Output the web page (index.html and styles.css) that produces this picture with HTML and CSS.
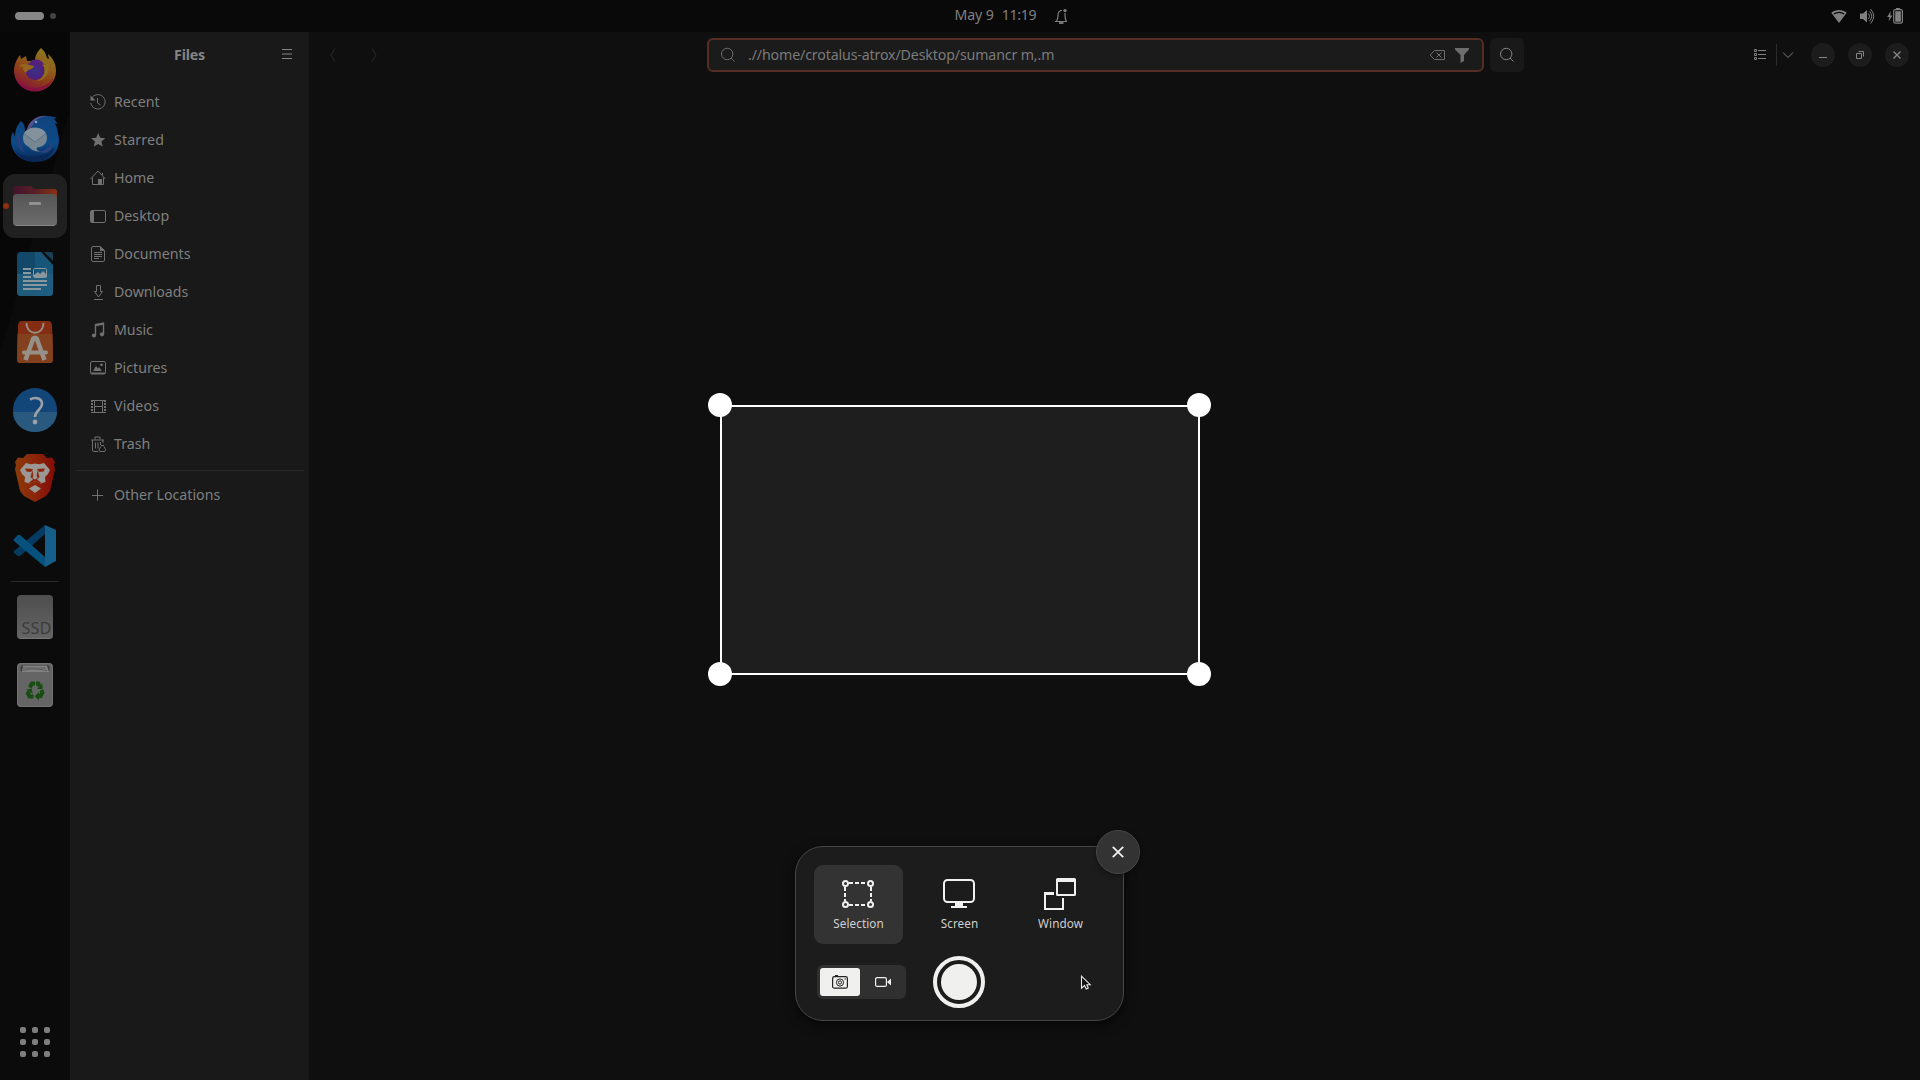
FILE: index.html
```html
<!DOCTYPE html>
<html lang="en">
<head>
<meta charset="utf-8">
<title>Files</title>
<link rel="stylesheet" href="styles.css">
</head>
<body>
<header class="topbar">
  <div class="workspaces"><span class="pill"></span><span class="dot"></span></div>
  <div class="clock"><span>May 9</span><span class="time">11:19</span>
    <svg class="bell" width="16" height="16" viewBox="0 0 16 16" fill="none" stroke="currentColor"><path d="M2 13.500h12M3.500 13c1.500-1.500 1.300-3.500 1.500-6C5.200 4 6.500 2.500 9 2.500M12 7c0 2.500.1 4.500 1.300 6M12 5v2" stroke-width="1.200"/><path d="M6 15h4.500" stroke-width="1.800"/><circle cx="12" cy="2.600" r="1.700" fill="currentColor" stroke="none"/></svg>
  </div>
  <div class="status">
    <svg width="16" height="16" viewBox="0 0 16 16"><path d="M.3 4.800C4.500 1.200 11.500 1.200 15.700 4.800L8 15z" fill="currentColor"/><path d="M2.800 6C6 4 10 4 13.200 6" stroke="#090909" stroke-width="1.200" fill="none"/></svg>
    <svg width="16" height="16" viewBox="0 0 16 16"><path d="M1 5.500h3L8 2v12.500L4 11H1z" fill="currentColor"/><path d="M9.500 5.500q2 2.700 0 5.500M10.500 3.200q4.500 5 0 10M11.500 1q6.500 7 0 14.500" stroke="currentColor" fill="none"/></svg>
    <svg width="16" height="16" viewBox="0 0 16 16"><path d="M3.800 3L.2 9h2.300L1.500 13.500 5.500 7.500H3.200z" fill="currentColor"/><rect x="6.700" y="1.600" width="8.700" height="13.600" rx="1.700" fill="none" stroke="currentColor" stroke-width="1.200"/><path d="M9 0h4v1.500H9zM8.200 3.200h5.700v10.500H8.200z" fill="currentColor"/></svg>
  </div>
</header>

<div class="workspace">
  <nav class="dock">
    <div class="app"><svg width="48" height="48" viewBox="0 0 48 48">
      <defs>
        <linearGradient id="fx" x1=".8" y1="0" x2=".3" y2="1"><stop offset="0" stop-color="#8a7b23"/><stop offset=".35" stop-color="#90601a"/><stop offset=".65" stop-color="#8e3d19"/><stop offset="1" stop-color="#85103f"/></linearGradient>
        <radialGradient id="fg"><stop offset="0" stop-color="#383384"/><stop offset="1" stop-color="#501d7b"/></radialGradient>
      </defs>
      <path d="M30 2c4 3 5 7 6 10l2 1-1-5c6 5 8 11 8 17a21 20.500 0 0 1-42 0C3 18 6 13 9 9l1 4 5-3 1 5 8 0c0-6 3-10 6-13z" fill="url(#fx)"/>
      <circle cx="24" cy="24.500" r="9.500" fill="url(#fg)"/>
      <path d="M18 16c7-4 14-2 17 3l-3 0c4 6 1 14-7 16 12 0 16-14 10-20" fill="#8d701e"/>
      <path d="M20 15c6-3 11-1 13 4l-3-1c3 2 3 5 2 7-4-6-9-8-14-6z" fill="#53217d"/>
      <path d="M8 20c4-4 10-1 15 0-1 4-7 3-8 7-2-1-3-4-3-6z" fill="#96661e"/>
      <path d="M4 31c6 13 30 15 38 1-2 8-9 13-18 13S7 41 4 31z" fill="#840e45" opacity=".75"/>
    </svg></div>
    <div class="app"><svg class="mail" width="48" height="48" viewBox="0 0 48 48">
      <defs><linearGradient id="tb" x1="0" y1="0" x2="0" y2="1"><stop offset="0" stop-color="#10437d"/><stop offset=".6" stop-color="#0c4a86"/><stop offset="1" stop-color="#0a2858"/></linearGradient></defs>
      <path d="M16 15C19 5 27 1 35 1c6 0 8 1 11 2l-3 1 4 5-3-1 3 8-1-1c6 16-2 32-22 32C9 47 0 37 0 25c0-4 1-7 2-8l2 5c0-7 2-12 6-16 4 3 4 7 4 12z" fill="url(#tb)"/>
      <path d="M16 14C19 4 28 0 36 1c-8 1-13 5-14 9l-4 5z" fill="#54508c"/>
      <path d="M4 36c10 8 30 8 40-4-4 10-11 14-20 14-8 0-15-3-20-10z" fill="#0a2857"/>
      <path d="M6 20c-2 8 2 15 8 18-4-6-5-11-5-18z" fill="#2a3f7c"/>
      <path d="M27 36c8 1 13-4 13-10 3 9-5 15-13 10z" fill="#30417c"/>
      <path d="M12 23c0-6 5-10.500 12-10.500S36 17 36 23s-5 9.500-10 9.500c-1 1.500 0 3 3 4-6 0-9-2-11-4.500-3.500-1.500-6-5-6-9z" fill="#768793"/>
      <path d="M13 18.500l11 8.500 11-8.500q-3-5.500-11-5.500t-11 5.500z" fill="#83929d"/><path d="M13 18.500l11 8.500 11-8.500" fill="none" stroke="#5c7282"/><circle cx="25" cy="7" r="1.300" fill="#8aa0b0"/>
    </svg></div>
    <div class="app"><div class="tile"><i class="running"></i><svg width="48" height="48" viewBox="0 0 48 48">
      <defs><linearGradient id="fo"><stop offset="0" stop-color="#42142b"/><stop offset=".5" stop-color="#581f27"/><stop offset="1" stop-color="#8a3011"/></linearGradient><linearGradient id="fw" x2="0" y2="1"><stop offset="0" stop-color="#555"/><stop offset="1" stop-color="#6c6c6c"/></linearGradient></defs>
      <path d="M2 7q0-3 3-3h14q1.500 0 2.500 1.500T25 7h18q3 0 3 3v15H2z" fill="url(#fo)"/>
      <rect x="2" y="12" width="44" height="32" rx="4" fill="url(#fw)"/><path d="M5 43.500h38" stroke="#858585"/><rect x="18" y="20" width="12" height="3" rx="1" fill="#919191"/>
    </svg></div></div>
    <div class="app"><svg width="48" height="48" viewBox="0 0 48 48">
      <path d="M10 2h20l12 13v27q0 4-4 4H10q-4 0-4-4V6q0-4 4-4z" fill="#12486a"/><path d="M6 24h36v18q0 4-4 4H10q-4 0-4-4z" fill="#205b7a"/><path d="M24 2h6l12 13v27q0 4-4 4H24z" fill="#1b5f83" opacity=".6"/><path d="M33 2h7q2 0 2 2v7z" fill="#173f57"/>
      <path d="M12 19h8M12 23h8M12 27h8M12 31h24M12 35h24M12 39h18" stroke="#8a979d" stroke-width="2"/><rect x="22.500" y="18.500" width="13" height="9" rx="1" fill="none" stroke="#8a979d"/><path d="M23 27v-2l4-3 2 2 3-3 4 4v2z" fill="#8a979d"/>
    </svg></div>
    <div class="app"><svg width="48" height="48" viewBox="0 0 48 48">
      <path d="M11 3h26q3.500 0 4 4l1 34q0 4-3 4H9q-3 0-3-4L7 7q.500-4 4-4z" fill="#842d12"/><path d="M6.600 16h34.900l.5 25q0 4-3 4H9q-3 0-3-4z" fill="#82401f"/><path d="M15.500 5c0 13 17 13 17 0" fill="none" stroke="#979089" stroke-width="1.800"/>
      <path d="M14.500 42l8-22h3l8 22" fill="none" stroke="#979089" stroke-width="4.500" stroke-linejoin="bevel"/><rect x="11" y="32.500" width="26" height="4" rx="2" fill="#979089"/>
    </svg></div>
    <div class="app"><svg width="48" height="48" viewBox="0 0 48 48">
      <circle cx="24" cy="24" r="22" fill="#124679"/><path d="M2 26h44a22 20 0 0 1-44 0z" fill="#29597f"/>
      <path d="M19 13.500c6-3 12-1 12 4.500 0 6-7 6-7 13" fill="none" stroke="#9aa1a7" stroke-width="2.600"/><circle cx="24" cy="36" r="2.400" fill="#9aa1a7"/>
    </svg></div>
    <div class="app"><svg width="48" height="48" viewBox="0 0 48 48">
      <defs><linearGradient id="br"><stop offset="0" stop-color="#8b3b0a"/><stop offset=".45" stop-color="#8b270a"/><stop offset="1" stop-color="#850c08"/></linearGradient></defs>
      <path d="M16 0h16l4 4 5-.5 3 4.500-1 3 1 4-5 22-4 5-11 6-11-6-4-5-5-22 1-4-1-3 3-4.500 5 .5z" fill="url(#br)"/>
      <path d="M15 9l5 1.200 4-.7 4 .7L33 9l6 7-2 4-3 3 .5 5-5 1.500L24 27l-5.500 2.500-5-1.500.5-5-3-3-2-4zM24 31l6 3.500-6 4.500-6-4.500z" fill="#9b9795"/>
      <path d="M14 14.500l8 .5-2 3-4.500-.500zM34 14.500l-8 .5 2 3 4.500-.500zM21.500 16l-2 7 2.500 2.500-4 3 1.500 1 4.500-2.500 4.500 2.500 1.500-1-4-3 2.500-2.500-2-7-.8 6 1 2-2.700 1.500-2.700-1.500 1-2z" fill="#8b260a"/>
    </svg></div>
    <div class="app"><svg width="48" height="48" viewBox="0 0 48 48">
      <path d="M3 31l4 3q1 .5 2 0l25-22V3L3 29q-1 1 0 2z" fill="#053b62"/><path d="M3 17l4-4q1-.5 2 0l25 22v10L3 19q-1-1 0-2z" fill="#07517f"/><path d="M34 3l11 5v31l-11 6z" fill="#175f8b"/>
    </svg></div>
    <hr class="dock-line">
    <div class="app"><div class="ssd">SSD</div></div>
    <div class="app"><svg width="48" height="48" viewBox="0 0 48 48">
      <rect x="6" y="2" width="36" height="44" rx="4" fill="#656565"/><rect x="6.500" y="2.500" width="35" height="43" rx="4" fill="none" stroke="#747474"/><rect x="9.500" y="4" width="29" height="7" rx="3" fill="#3d3d3d"/><path d="M12 4.500h24l2 6.500H11z" fill="#818181"/><path d="M12 7h23M12 9.500q8-3 24 0" stroke="#5c5c5c" fill="none"/>
      <g fill="none" stroke="#174d11" stroke-width="4"><path d="M18.800 26.500l2.200-4h3"/><path d="M25 22.500h2.200l1.500 2.700M30.200 29l1.200 2.500-1.700 3.500h-2.200M22.500 35.500h-4l-1.500-3 1-2"/></g><path d="M31.500 22.500v5.500h-5.500zM28 30.800v8.700l-4.300-4.300zM15 28.800l5.500-1.300 1.300 5z" fill="#174d11"/>
    </svg></div>
    <div class="apps-grid"><i></i><i></i><i></i><i></i><i></i><i></i><i></i><i></i><i></i></div>
  </nav>

  <aside class="sidebar">
    <div class="side-head"><h1>Files</h1><svg class="menu" width="16" height="16" viewBox="0 0 16 16" stroke="currentColor"><path d="M3 3.500h10M3 8h10M3 12.500h10" stroke-width="1"/></svg></div>
    <ul class="places">
      <li><svg viewBox="0 0 16 16"><path d="M1.500 4.500A7.200 7.200 0 1 1 .8 9M7.500 4v5l3 2"/><path d="M.5 1.500v5h5z" fill="currentColor" stroke="none"/></svg>Recent</li>
      <li class="wide"><svg viewBox="0 0 16 16"><path d="M8.200 1l2 4.800 5.200.4-4 3.400 1.300 5-4.500-2.700-4.500 2.700 1.300-5-4-3.400 5.200-.4z" fill="currentColor" stroke="none"/></svg>Starred</li>
      <li><svg viewBox="0 0 16 16"><path d="M.5 9l7.500-8 7.500 8M2.500 7.500v7h11v-7M12.500 5V3"/><path d="M8 9h4v5.500H8z" fill="currentColor" stroke="none"/></svg>Home</li>
      <li><svg viewBox="0 0 16 16"><rect x=".5" y="2.500" width="15" height="12" rx="1.500"/><path d="M1 2.500h3v12H1z" fill="currentColor" stroke="none"/></svg>Desktop</li>
      <li><svg viewBox="0 0 16 16"><path d="M3 .5h7.500l4 4V14q0 1.500-1.500 1.500H3Q1.500 15.500 1.500 14V2Q1.500.5 3 .5zM4 6.500h8M4 8.500h8M4 10.500h8M4 12.500h5"/><path d="M10 .5v4.500h4.500z" fill="currentColor" stroke="none"/></svg>Documents</li>
      <li><svg viewBox="0 0 16 16"><path d="M6.500 1.500h4v6h2L8.500 13 4.500 7.500h2zM4 15.500h9"/></svg>Downloads</li>
      <li><svg viewBox="0 0 16 16"><path d="M5.500 13V2.500l8-1.500v11M5.500 3.500l8-1.500" stroke-width="1.400"/><circle cx="4" cy="13.500" r="2.100" fill="currentColor" stroke="none"/><circle cx="12" cy="12.300" r="2.100" fill="currentColor" stroke="none"/></svg>Music</li>
      <li><svg viewBox="0 0 16 16"><rect x=".5" y="1.500" width="15" height="12.500" rx="1.500"/><path d="M3 11l3-5 2 2.500L9 7l3 4zM1 12.500h14V14H1z" fill="currentColor" stroke="none"/><circle cx="11.500" cy="4.800" r="1.400" fill="currentColor" stroke="none"/></svg>Pictures</li>
      <li class="wide"><svg viewBox="0 0 16 16"><path d="M4.500 2.500h8v12h-8zM4.500 8.500h8"/><path d="M2 2v13M15 2v13" stroke-width="2" stroke-dasharray="2 1"/><path d="M1.500 2.500h14M1.500 14.500h14"/></svg>Videos</li>
      <li><svg viewBox="0 0 16 16"><path d="M1 4h13M5 3.500V1h5v2.500M2.500 4v10q0 1.500 1.500 1.500h4M5.500 6.500v6M8 6.500v6M10.500 6v3M13 4v3M11 9.500h3M11 10.500q-4 5 0 5h3q3 0 0-5"/></svg>Trash</li>
    </ul>
    <hr class="side-line">
    <ul class="places"><li><svg viewBox="0 0 16 16"><path d="M7.500 2.500v11M2 8.500h11"/></svg>Other Locations</li></ul>
  </aside>

  <main class="content">
    <div class="toolbar">
      <div class="nav-arrows">
        <svg width="6" height="14" viewBox="0 0 6 14"><path d="M5 .5L1 7l4 6.500"/></svg>
        <svg width="6" height="14" viewBox="0 0 6 14"><path d="M1 .5L5 7l-4 6.500"/></svg>
      </div>
      <div class="path">
        <svg width="16" height="16" viewBox="0 0 16 16"><circle cx="7.200" cy="7" r="5.700"/><path d="M11 11l3.500 3.500"/></svg>
        <span class="path-text">.//home/crotalus-atrox/Desktop/sumancr m,.m</span>
        <svg class="erase" width="16" height="16" viewBox="0 0 16 16"><path d="M5.500 3.500h10v9h-10L1 8zM7.500 5.500l5 5M12.500 5.500l-5 5"/></svg>
        <svg width="16" height="16" viewBox="0 0 16 16"><path d="M1 1h14v1.500L10 8v6l-3.500 2V8L1 2.500z" fill="currentColor" stroke="none"/></svg>
      </div>
      <div class="find"><svg width="16" height="16" viewBox="0 0 16 16"><circle cx="7.200" cy="7" r="5.700"/><path d="M11 11l3.500 3.500"/></svg></div>
      <div class="view">
        <svg width="12" height="12" viewBox="0 0 12 12"><path d="M.5.5h2v2h-2zM.5 4.500h2v2h-2zM.5 8.500h2v2h-2zM4 1.500h8M4 5.500h8M4 9.500h8"/></svg>
        <i class="split"></i>
        <svg width="12" height="8" viewBox="0 0 12 8"><path d="M1 1.500L6 6.500 11 1.500"/></svg>
      </div>
      <div class="window-buttons">
        <span><svg width="10" height="10" viewBox="0 0 10 10"><path d="M1 7.500h8"/></svg></span>
        <span><svg width="10" height="10" viewBox="0 0 10 10"><path d="M1.500 3.500h5v5h-5zM3.500 1.500h5v5"/></svg></span>
        <span><svg width="10" height="10" viewBox="0 0 10 10"><path d="M1.500 1.500l7 7M8.500 1.500l-7 7" stroke-width="1.400"/></svg></span>
      </div>
    </div>
  </main>
</div>

<div class="selection"><i class="h tl"></i><i class="h tr"></i><i class="h bl"></i><i class="h br"></i></div>

<section class="shot">
  <button class="close"><svg width="12" height="12" viewBox="0 0 12 12"><path d="M.8.8l10.400 10.400M11.200.8L.8 11.200" stroke="currentColor" stroke-width="1.800"/></svg></button>
  <div class="modes">
    <div class="mode active"><svg width="32" height="32" viewBox="0 0 32 32" fill="none" stroke="currentColor" stroke-width="2"><circle cx="3.500" cy="5.500" r="2.500"/><circle cx="28.500" cy="5.500" r="2.500"/><circle cx="3.500" cy="26.500" r="2.500"/><circle cx="28.500" cy="26.500" r="2.500"/><path d="M7 5h18M7 27h18" stroke-dasharray="4 2"/><path d="M3 9v14M29 9v14" stroke-dasharray="4 2"/></svg>Selection</div>
    <div class="mode"><svg width="32" height="32" viewBox="0 0 32 32" fill="none" stroke="currentColor" stroke-width="2"><rect x="1" y="2" width="30" height="22" rx="3.500"/><path d="M12 24.500h8V28h4v2H8v-2h4z" fill="currentColor" stroke="none"/></svg>Screen</div>
    <div class="mode"><svg width="32" height="32" viewBox="0 0 32 32" fill="none" stroke="currentColor" stroke-width="2"><rect x="13" y="1" width="18" height="16" rx=".5"/><path d="M12 1h20v3H12zM0 14h10v3H0z" fill="currentColor" stroke="none"/><path d="M1 15v16h18V20"/></svg>Window</div>
  </div>
  <div class="controls">
    <div class="kind"><span class="on"><svg width="16" height="14" viewBox="0 0 16 14" fill="none" stroke="currentColor"><rect x=".6" y="1.600" width="14.800" height="11.600" rx="1.800" stroke-width="1.200"/><circle cx="8" cy="7.500" r="3.600"/><circle cx="8" cy="7.500" r="1.600"/><path d="M3 .8h3" stroke-width="1.600"/><path d="M12.500 4h1.500"/></svg></span><span><svg width="16" height="12" viewBox="0 0 16 12" fill="none" stroke="currentColor" stroke-width="1.200"><rect x=".6" y="1.600" width="10.800" height="8.800" rx="1.500"/><path d="M12 6l4-3.500v7z" fill="currentColor" stroke="none"/></svg></span></div>
    <button class="shutter"><i></i></button>
  </div>
</section>
<svg class="cursor" width="12" height="16" viewBox="0 0 12 16"><path d="M1.500 1.200v12l3-2.700 1.800 3.500 2-1-1.500-3.300h3.400z" fill="#111" stroke="#e8e8e8" stroke-width="1.100"/></svg>
</body>
</html>
```

FILE: styles.css
```css
* { box-sizing: border-box; }
html, body { margin: 0; height: 100%; }
body {
  display: flex; flex-direction: column; overflow: hidden;
  background: #0f0f0f; color: #7f7f7f;
  font-family: "Noto Sans", "Open Sans", sans-serif; font-size: 14.200px;
}
ul, h1 { margin: 0; padding: 0; list-style: none; }
hr { border: 0; margin: 0; }
svg { flex: none; display: block; }

.topbar { height: 32px; flex: none; background: #090909; display: grid; grid-template-columns: 1fr auto 1fr; align-items: center; padding: 0 17px 0 15px; color: #808080; }
.workspaces { display: flex; align-items: center; gap: 6px; }
.pill { width: 29px; height: 8px; border-radius: 4px; background: #868686; }
.dot { width: 6px; height: 6px; border-radius: 50%; background: #454545; }
.clock { display: flex; align-items: center; line-height: 20px; padding: 0 0 2px 106px; letter-spacing: -.15px; }
.time { margin-left: 8px; letter-spacing: -.3px; }
.bell { margin: 2px 0 0 17px; }
.status { display: flex; justify-content: flex-end; gap: 12px; }

.workspace { flex: 1; display: flex; min-height: 0; }
.dock { width: 70px; flex: none; padding-top: 4px; display: flex; flex-direction: column; background: linear-gradient(106deg, #070707 88px, #0b0b0b 90px); }
.app { height: 68px; flex: none; display: flex; align-items: center; justify-content: center; }
.mail { margin-top: 2px; }
.tile { width: 64px; height: 64px; border-radius: 12px; background: #202020; display: flex; align-items: center; justify-content: center; position: relative; }
.running { position: absolute; left: 0; top: 29px; width: 6px; height: 6px; border-radius: 50%; background: #8c300f; }
.dock-line { height: 1px; width: 48px; margin: 1px auto; background: #2c2c2c; flex: none; }
.ssd { width: 36px; height: 44px; border-radius: 4px; background: linear-gradient(#4e4e4e, #646464); border-bottom: 1px solid #777; color: #3c3c3c; font-size: 16.300px; line-height: 20px; padding: 23px 0 0 4.500px; }
.apps-grid { margin: auto auto 23px; display: grid; grid-template-columns: repeat(3, 6px); gap: 6px; }
.apps-grid i { width: 6px; height: 6px; border-radius: 2px; background: #7e7e7e; }

.sidebar { width: 239px; flex: none; background: #191919; }
.side-head { height: 46px; display: flex; align-items: center; justify-content: center; position: relative; }
.side-head h1 { font-size: 14.200px; font-weight: 700; color: #858585; letter-spacing: -.2px; padding-bottom: 2px; }
.menu { position: absolute; right: 14px; top: 14px; color: #858585; }
.places { padding: 0 20px; }
.side-head + .places { padding-top: 5px; }
.places li { height: 38px; display: flex; align-items: center; gap: 8px; padding-bottom: 1px; white-space: nowrap; }
.places .wide { letter-spacing: .15px; }
.places svg { width: 16px; height: 16px; fill: none; stroke: currentColor; color: #707070; }
.side-line { height: 1px; background: #272727; margin: 7px 5px 5px 6px; }

.content { flex: 1; min-width: 0; }
.toolbar { height: 46px; display: flex; align-items: center; }
.toolbar svg { fill: none; stroke: currentColor; }
.nav-arrows { display: flex; gap: 35px; margin-left: 21px; color: #2b2b2b; width: 377px; }
.path { width: 777px; height: 34px; border: 2px solid #552e23; border-radius: 6px; background: #1b1b1b; display: flex; align-items: center; padding: 0 12px 0 11px; color: #6c6c6c; }
.path-text { margin: 0 0 2px 12px; flex: 1; color: #7a7a7a; white-space: nowrap; letter-spacing: -.14px; }
.erase { margin-right: 9px; }
.find { width: 34px; height: 34px; margin-left: 6px; border-radius: 6px; background: #191919; display: flex; align-items: center; justify-content: center; color: #848484; }
.view { display: flex; align-items: center; margin-left: 230px; color: #808080; }
.split { width: 1px; height: 22px; background: #2c2c2c; margin: 0 5px 0 10px; }
.window-buttons { display: flex; gap: 13px; margin-left: 17px; color: #858585; }
.window-buttons span { width: 24px; height: 24px; border-radius: 50%; background: #1c1c1c; display: flex; align-items: center; justify-content: center; }

/* Capture area and its drag handles, over the desktop */
.selection { position: absolute; left: 720px; top: 405px; width: 480px; height: 270px; border: 2px solid #fff; background: #1e1e1e; }
.h { position: absolute; width: 24px; height: 24px; border-radius: 50%; background: #fff; }
.tl { left: -14px; top: -14px; }
.tr { right: -13px; top: -14px; }
.bl { left: -14px; bottom: -13px; }
.br { right: -13px; bottom: -13px; }

/* Floating screenshot panel */
.shot { position: absolute; left: 795px; top: 846px; width: 329px; height: 175px; border: 1px solid #474747; border-radius: 28px; background: #1c1c1c; padding: 18px; box-shadow: 0 4px 12px rgba(0, 0, 0, .6); color: #f0f0ee; }
.close { position: absolute; right: -17px; top: -17px; width: 44px; height: 44px; border-radius: 50%; border: 1px solid #474747; background: #333; color: #f0f0ee; display: flex; align-items: center; justify-content: center; padding: 0; box-shadow: 0 2px 5px rgba(0, 0, 0, .4); }
.modes { display: grid; grid-template-columns: repeat(3, 89px); gap: 12px; }
.mode { height: 79px; border-radius: 9px; display: flex; flex-direction: column; align-items: center; padding-top: 13px; gap: 5px; font-size: 11.700px; letter-spacing: .08px; line-height: 17px; color: #cfcfcf; }
.mode svg { color: #f0f0ee; margin-right: 1px; }
.active { background: #333; }
.controls { display: flex; align-items: center; padding: 12px 0 0 3px; }
.kind { width: 89px; height: 34px; border-radius: 6px; background: #303030; padding: 3px; display: flex; gap: 3px; }
.kind span { width: 40px; height: 28px; border-radius: 3px; display: flex; align-items: center; justify-content: center; flex: none; }
.kind .on { background: #f0f0ee; color: #222; }
.shutter { width: 52px; height: 52px; margin-left: 27px; border-radius: 50%; border: 4px solid #f0f0ee; background: transparent; padding: 4px; }
.shutter i { display: block; width: 36px; height: 36px; border-radius: 50%; background: #f0f0ee; }

.cursor { position: absolute; left: 1080px; top: 975px; }
```
